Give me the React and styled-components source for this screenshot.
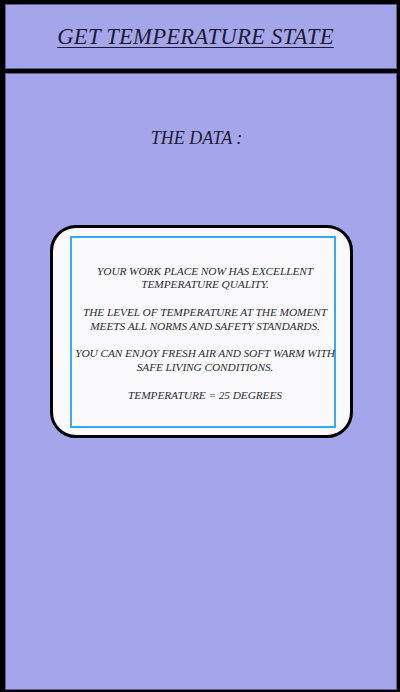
import React from "react";
import styled, { createGlobalStyle } from "styled-components";

const Global = createGlobalStyle`
  html, body { margin: 0; padding: 0; background: #000; }
  body { width: 400px; height: 692px; overflow: hidden; }
  #root { height: 692px; }
`;

const Screen = styled.div`
  box-sizing: border-box;
  height: 692px;
  width: 400px;
  padding: 4px 3px 2px 5px;
  display: flex;
  flex-direction: column;
  gap: 4px;
  background: #000;
  font-family: "Liberation Serif", "DejaVu Serif", serif;
  font-style: italic;
`;

const Panel = styled.div`
  box-sizing: border-box;
  background: #a5a5eb;
  border: 1px solid #5c5c8e;
`;

const Header = styled(Panel)`
  height: 65px;
  display: flex;
  align-items: center;
  justify-content: center;
`;

const Title = styled.h1`
  margin: 0 11px 0 0;
  font-size: 22.7px;
  font-weight: normal;
  color: #1c1c2e;
  text-decoration: underline;
  text-decoration-thickness: 1px;
  text-underline-offset: 3px;
  letter-spacing: 0.2px;
  white-space: nowrap;
`;

const Main = styled(Panel)`
  flex: 1;
  display: flex;
  flex-direction: column;
  align-items: center;
  padding-top: 54px;
`;

const SubTitle = styled.h2`
  margin: 0 0 0 -9px;
  font-size: 18px;
  font-weight: normal;
  color: #1c1c2e;
`;

const Card = styled.div`
  box-sizing: border-box;
  margin-top: 76px;
  margin-left: 0;
  width: 303px;
  height: 213px;
  background: #fafafc;
  border: 3px solid #000;
  border-radius: 26px;
  padding: 8px 14px 7px 17px;
  display: flex;
`;

const Message = styled.div`
  box-sizing: border-box;
  flex: 1;
  min-width: 0;
  border: 2px solid #3aa8f5;
  display: flex;
  align-items: center;
  justify-content: center;
  padding: 3px 0 0 5px;
`;

const Text = styled.p`
  margin: 0;
  text-align: center;
  font-size: 11.4px;
  line-height: 13.8px;
  color: #2e2e36;
  letter-spacing: -0.1px;
  white-space: nowrap;
`;

export default function App() {
  return (
    <>
      <Global />
      <Screen>
        <Header>
          <Title>GET TEMPERATURE STATE</Title>
        </Header>
        <Main>
          <SubTitle>THE DATA :</SubTitle>
          <Card>
            <Message>
              <Text>
                YOUR WORK PLACE NOW HAS EXCELLENT
                <br />
                TEMPERATURE QUALITY.
                <br />
                <br />
                THE LEVEL OF TEMPERATURE AT THE MOMENT
                <br />
                MEETS ALL NORMS AND SAFETY STANDARDS.
                <br />
                <br />
                YOU CAN ENJOY FRESH AIR AND SOFT WARM WITH
                <br />
                SAFE LIVING CONDITIONS.
                <br />
                <br />
                TEMPERATURE = 25 DEGREES
              </Text>
            </Message>
          </Card>
        </Main>
      </Screen>
    </>
  );
}
